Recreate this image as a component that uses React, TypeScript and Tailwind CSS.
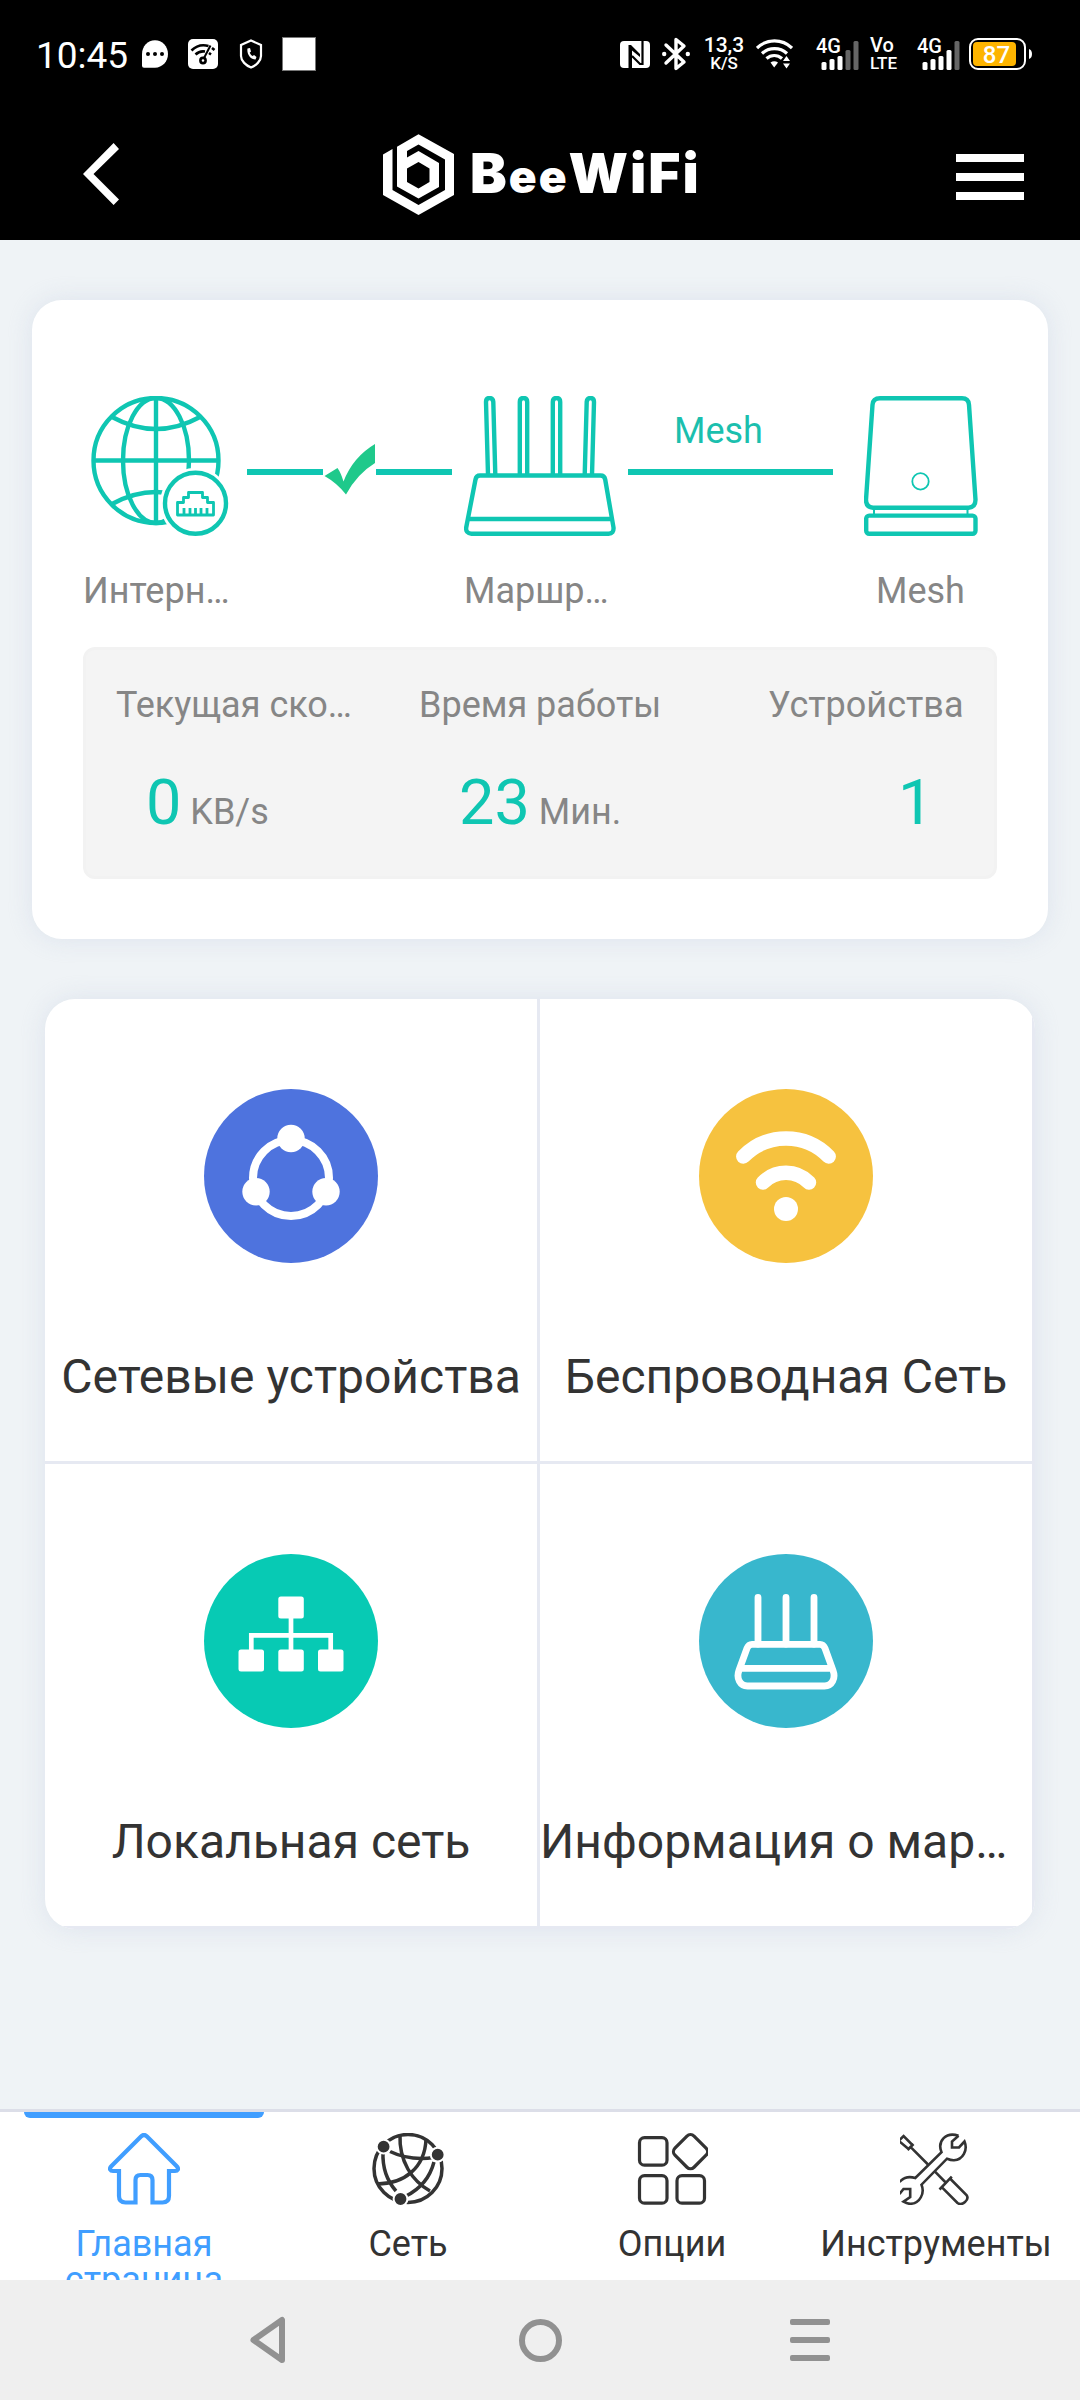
import { ReactNode } from 'react';

type TTile = {
  label: string;
  icon: ReactNode;
  className: string;
};

type TTab = {
  label: string;
  icon: ReactNode;
};

const TEAL = '#0fc6b2';

const Signal = ({ level }: { level: number }) => {
  const tops = [26, 23, 20, 14, 5];

  return (
    <svg width="46" height="44" viewBox="-1 -4 46 44">
      <text
        x="0"
        y="16.500"
        fill="#fff"
        fontSize="21"
        fontWeight="500"
        textLength="25"
        lengthAdjust="spacingAndGlyphs"
      >
        4G
      </text>
      {tops.map((top, i) => (
        <rect
          key={top}
          x={5.5 + i * 8}
          y={top}
          width="5"
          height={34 - top}
          rx="1.5"
          fill={i < level ? '#fff' : '#666'}
        />
      ))}
    </svg>
  );
};

const StatusBar = () => {
  return (
    <div className="flex h-[108px] items-center pr-[46px] pl-[36px]">
      <span className="w-[106px] pt-[3px] text-[37px] leading-[37px]">10:45</span>
      <svg width="26" height="28" viewBox="0 0 26 28">
        <path d="M13 .3C20.200 .3 26 6.500 26 14s-5.800 13.700-13 13.700H2q-2 0-2-2V14C0 6.500 5.800 .3 13 .3Z" fill="#fff" />
        <circle cx="6" cy="14" r="2" />
        <circle cx="13" cy="14" r="2" />
        <circle cx="20" cy="14" r="2" />
      </svg>
      <svg width="30" height="30" viewBox="0 0 30 30" className="ml-[20px]">
        <rect width="30" height="30" rx="5" fill="#fff" />
        <g fill="none" stroke="#000" strokeWidth="2.600">
          <path d="M3.500 11.500C8.500 6.500 15 5.500 20.500 7" />
          <path d="M7.500 15.500C10 13 13.500 12 17 12.500" />
          <path d="M22.500 6.500 16 19" strokeWidth="2" />
          <circle cx="15" cy="21.500" r="2.600" />
          <path d="m24 9 2.500 2M21 14l2 1.500" />
        </g>
      </svg>
      <svg width="24" height="30" viewBox="0 0 24 30" className="ml-[21px]">
        <path d="M12 1.500 22 6v11c0 5-5 9.500-10 11.500C7 26.500 2 22 2 17V6Z" fill="none" stroke="#fff" strokeWidth="2.200" />
        <path d="M8.500 9.500 11 9l1 3.500-1.300 1.300c.8 1.700 1.600 2.500 3 3.300l1.300-1 2.500 1.800-1 2.600C11.500 20.500 7.500 15 8.500 9.500Z" fill="#fff" />
      </svg>
      <div className="ml-[19px] h-[34px] w-[34px] border border-[#777] bg-white" />

      <svg width="30" height="27" viewBox="0 0 30 27" className="ml-auto">
        <rect width="30" height="27" rx="4" fill="#fff" />
        <path d="M8.500 27V4h2.500L20 13v3L12 9.500V27Z" />
        <path d="M22.500 0v23H20L12 15" fill="none" stroke="#000" strokeWidth="2.200" />
      </svg>
      <svg width="28" height="34" viewBox="0 0 28 34" className="ml-[12px]">
        <path d="M4 8l18 17-8 6.500V2.500L22 9 4 26" fill="none" stroke="#fff" strokeWidth="3.400" strokeLinecap="round" strokeLinejoin="round" />
        <circle cx="2.200" cy="17" r="2.200" fill="#fff" />
        <circle cx="25.800" cy="17" r="2.200" fill="#fff" />
      </svg>
      <div className="ml-[14px] flex w-[40px] flex-col items-center font-medium">
        <span className="text-[21px] leading-[18px]">13,3</span>
        <span className="text-[17px] leading-[18px]">K/S</span>
      </div>
      <svg width="37" height="30" viewBox="0 0 37 30" className="ml-[12px]">
        <g fill="none" stroke="#fff" strokeWidth="3.200">
          <path d="M1 9C11-.5 26-.5 36 9" />
          <path d="M6 14.500C13 8 24 8 31 14.500" />
          <path d="M10.500 19.500c4.500-4 11-4 15.500 0" />
        </g>
        <path d="M14.500 23.500q3.700-2.500 7.500 0L18.200 28.500Z" fill="#fff" />
        <path d="m30.500 17 3.500 5h-7ZM27 24.500h7l-3.500 5Z" fill="#fff" />
      </svg>
      <div className="ml-[22px] flex">
        <Signal level={3} />
      </div>
      <div className="ml-[9px] flex w-[32px] flex-col font-medium">
        <span className="text-[20px] leading-[18px]">Vo</span>
        <span className="text-[17px] leading-[19px]">LTE</span>
      </div>
      <div className="ml-[14px] flex">
        <Signal level={4} />
      </div>
      <svg width="66" height="34" viewBox="0 0 66 34" className="ml-[6px]">
        <rect x="2" y="2" width="55" height="30" rx="8" fill="none" stroke="#fff" strokeWidth="2" />
        <rect x="5" y="5" width="43" height="24" rx="4" fill="#fdb400" />
        <path d="M61 12q3 1 3 5t-3 5Z" fill="#fff" />
        <text x="28.500" y="25.500" fill="#fff" fontSize="24" fontWeight="500" textAnchor="middle">
          87
        </text>
      </svg>
    </div>
  );
};

const Header = () => {
  return (
    <div className="flex h-[132px] items-center pr-[56px] pl-[83px]">
      <svg width="36" height="62" viewBox="0 0 36 62">
        <path d="M0 31 30.600 0 36 6 10.500 31 36 56.500 30.600 62Z" fill="#fff" />
      </svg>
      <svg width="71" height="81" viewBox="383 133 71 81" className="ml-[264px]">
        <path
          fill="#fff"
          fillRule="evenodd"
          d="M397 145.700 418.500 133.300 454 153V194L418.500 214 383 194V153.500L392.500 148V189L418.500 204 445 189V158.500L418.500 143.500 407 150V156.500L418.500 150 439 162V186L418.500 197.500 397 185.500ZM418.500 161 407 167.500V181L418.500 187.500 429.500 181V167.500Z"
        />
      </svg>
      <p className="ml-[16px] font-['Inter'] text-[55px] leading-[60px] font-black tracking-[2px] whitespace-nowrap">
        B<span className="text-[46px]">ee</span>WiFi
      </p>
      <div className="ml-auto flex flex-col gap-[11px] pt-[6px]">
        <div className="h-2 w-[68px] bg-white" />
        <div className="h-2 w-[68px] bg-white" />
        <div className="h-2 w-[68px] bg-white" />
      </div>
    </div>
  );
};

const GlobeIcon = () => (
  <svg width="140" height="140" viewBox="90 396 140 140" fill="none" stroke={TEAL} strokeWidth="4.400">
    <circle cx="156" cy="460.500" r="62.500" />
    <path d="M156 398v125M93.500 460.500h125" />
    <ellipse cx="156" cy="460.500" rx="33" ry="62.500" />
    <path d="M112 417q44 24 88 0M112 504q44-24 88 0" />
    <circle cx="195.500" cy="503.300" r="35.500" fill="#fff" stroke="none" />
    <circle cx="195.500" cy="503.300" r="30.500" fill="#fff" />
    <path
      d="M177.500 515v-12.500h6v-5h5v-5h14v5h5v5h6V515ZM184 515v-7M190 515v-7M195.500 515v-7M201 515v-7M207 515v-7"
      strokeWidth="2.800"
      strokeLinejoin="round"
    />
  </svg>
);

const RouterIcon = () => (
  <svg width="152" height="140" viewBox="464 396 152 140" fill="none" stroke={TEAL} strokeWidth="4.400" strokeLinejoin="round">
    <path d="M488 475 486 402q0-4 3.500-4t3.800 4l2 73M519.800 475v-73q0-4 3.700-4t3.700 4v73M552.800 475v-73q0-4 3.700-4t3.700 4v73M584.700 475l2-73q.3-4 3.800-4t3.500 4l-2 73" />
    <path d="M480 475.500H600.500q4 0 4.700 4L613.500 527.500q.5 6-5 6.200H471.500q-6-.5-5.300-6.200L475.500 479.500q.7-4 4.500-4ZM468 519H612" />
  </svg>
);

const MeshIcon = () => (
  <svg width="114" height="140" viewBox="864 396 114 140" fill="none" stroke={TEAL} strokeWidth="4.400">
    <path d="M880 398.300h82q6.500 0 7 6.500l6.500 95q0 7.500-7 7.900H873q-7-.5-7-7.900l6.500-95q.5-6.500 7.500-6.500Z" />
    <rect x="866.200" y="515.600" width="109.300" height="18.100" rx="3" />
    <path d="M874 508v8M967.500 508v8" strokeWidth="2" />
    <circle cx="920.500" cy="481.400" r="8.200" strokeWidth="1.800" />
  </svg>
);

const StatusCard = () => {
  return (
    <div className="mx-8 mt-[60px] h-[639px] rounded-[30px] bg-white pt-[96px] pr-[51px] pl-[51px] shadow-[0_0_24px_rgba(200,208,226,0.45)]">
      <div className="flex h-[140px] items-start pl-[7px]">
        <GlobeIcon />
        <div className="ml-[17px] flex w-[205px] items-start justify-between">
          <div className="mt-[73px] h-[6px] w-[76px] bg-[#0fc6b2]" />
          <svg width="52" height="52" viewBox="0 0 52 52" className="mt-[47px]">
            <path d="M.5 33 13.500 25Q17 30 19.500 38.500 29 14 51 1V20Q33 31 22 51.500 13 40 .5 33Z" fill="#1fc98b" />
          </svg>
          <div className="mt-[73px] h-[6px] w-[76px] bg-[#0fc6b2]" />
        </div>
        <div className="ml-3">
          <RouterIcon />
        </div>
        <div className="ml-3 w-[205px] pt-[17px]">
          <p className="pl-[46px] text-[36px] leading-[36px] text-[#1bbfae]">Mesh</p>
          <div className="mt-5 h-[6px] bg-[#0fc6b2]" />
        </div>
        <div className="ml-[31px]">
          <MeshIcon />
        </div>
      </div>
      <div className="mt-[37px] flex text-[36px] leading-[36px] text-[#868686]">
        <span className="w-[381px]">Интерн…</span>
        <span className="w-[412px]">Маршр…</span>
        <span>Mesh</span>
      </div>
      <div className="mt-[38px] flex h-[232px] w-[914px] rounded-xl border-[3px] border-[#f2f2f2] bg-[#f4f4f4] pt-[37px] pl-[30px] text-[36px] text-[#868686]">
        <div className="w-[303px]">
          <p className="leading-[36px]">Текущая ско…</p>
          <p className="mt-[48px] pl-[30px] leading-[64px]">
            <span className="text-[63px] text-[#0fc6b2]">0</span> KB/s
          </p>
        </div>
        <div className="w-[349px]">
          <p className="leading-[36px]">Время работы</p>
          <p className="mt-[48px] pl-[40px] leading-[64px]">
            <span className="text-[63px] text-[#0fc6b2]">23</span> Мин.
          </p>
        </div>
        <div>
          <p className="leading-[36px]">Устройства</p>
          <p className="mt-[48px] pl-[130px] leading-[64px]">
            <span className="text-[63px] text-[#0fc6b2]">1</span>
          </p>
        </div>
      </div>
    </div>
  );
};

const tiles: TTile[] = [
  {
    label: 'Сетевые устройства',
    className: 'text-center',
    icon: (
      <>
        <circle cx="87" cy="87" r="87" fill="#4e73de" />
        <circle cx="87" cy="89" r="38" fill="none" stroke="#fff" strokeWidth="8" />
        <circle cx="87" cy="49.500" r="13.700" fill="#fff" />
        <circle cx="52" cy="102.700" r="13.700" fill="#fff" />
        <circle cx="122" cy="102.700" r="13.700" fill="#fff" />
      </>
    ),
  },
  {
    label: 'Беспроводная Сеть',
    className: 'text-center',
    icon: (
      <>
        <circle cx="87" cy="87" r="87" fill="#f6c23f" />
        <path
          d="M44.300 67.500A59.600 59.600 0 0 1 129.700 67.500M64 93.500A32 32 0 0 1 110 93.500"
          fill="none"
          stroke="#fff"
          strokeWidth="14.500"
          strokeLinecap="round"
        />
        <circle cx="87" cy="120" r="12" fill="#fff" />
      </>
    ),
  },
  {
    label: 'Локальная сеть',
    className: 'text-center',
    icon: (
      <>
        <circle cx="87" cy="87" r="87" fill="#07cab4" />
        <path d="M87 60V98M47.300 98V81.300H126.700V98" fill="none" stroke="#fff" strokeWidth="4.700" />
        <g fill="#fff">
          <rect x="74.300" y="42.500" width="25.500" height="22" rx="2.500" />
          <rect x="34.500" y="95.500" width="25.500" height="22" rx="2.500" />
          <rect x="74.300" y="95.500" width="25.500" height="22" rx="2.500" />
          <rect x="114" y="95.500" width="25.500" height="22" rx="2.500" />
        </g>
      </>
    ),
  },
  {
    label: 'Информация о мар…',
    className: 'text-left',
    icon: (
      <>
        <circle cx="87" cy="87" r="87" fill="#38b7cd" />
        <g fill="none" stroke="#fff" strokeWidth="6.800">
          <path d="M59 43.500V90M87 43.500V90M115 43.500V90" strokeLinecap="round" />
          <path d="M53 90.300H121c2.500 0 4 1.500 5 4l8 22c3 8-1 15.700-8.500 15.700H48.500c-7.500 0-11.500-7.700-8.500-15.700l8-22c1-2.500 2.500-4 5-4ZM42 114.300H132" />
        </g>
      </>
    ),
  },
];

const TileGrid = () => {
  return (
    <div className="mx-[45px] mt-[60px] grid grid-cols-2 overflow-hidden rounded-[30px] bg-white shadow-[0_0_24px_rgba(200,208,226,0.45)]">
      {tiles.map((item) => (
        <div
          key={item.label}
          className="flex h-[465px] flex-col items-center border-r-[3px] border-b-[3px] border-[#e6e9f2] pt-[90px]"
        >
          <svg width="174" height="174" viewBox="0 0 174 174">
            {item.icon}
          </svg>
          <p
            className={`mt-[86px] w-full text-[48px] leading-[56px] whitespace-nowrap text-[#333] ${item.className}`}
          >
            {item.label}
          </p>
        </div>
      ))}
    </div>
  );
};

const tabs: TTab[] = [
  {
    label: 'Главная страница',
    icon: (
      <path
        d="M33 3.500 3.500 33c-3 3-1 5 1.500 5H11V63q0 6.500 6.500 6.500H27.500V47q0-5 5-5h7q5 0 5 5V69.500H54.500q6.500 0 6.500-6.500V38h6c2.500 0 4.500-2 1.500-5L39 3.500q-3-3-6 0Z"
        strokeWidth="4.200"
      />
    ),
  },
  {
    label: 'Сеть',
    icon: (
      <>
        <g strokeWidth="3.500">
          <circle cx="36" cy="35.500" r="34" />
          <path d="M28 2C27 28 40 48 58 58M54 6C53 35 32 51 5 51" />
          <path d="M18 18.500Q38 28 62 24.500M11 19Q10 42 24 58M62 29Q56 52 34 63" />
        </g>
        <g fill="currentColor" stroke="#fff" strokeWidth="2">
          <circle cx="11.600" cy="13.700" r="6.900" />
          <circle cx="65.700" cy="21.700" r="6.900" />
          <circle cx="28.500" cy="66" r="6.900" />
        </g>
      </>
    ),
  },
  {
    label: 'Опции',
    icon: (
      <g strokeWidth="3.200">
        <rect x="3.500" y="4.700" width="27.500" height="27.500" rx="5" />
        <rect x="3.500" y="42.700" width="27.500" height="27.500" rx="5" />
        <rect x="41" y="42.700" width="27.500" height="27.500" rx="5" />
        <rect x="41" y="5.200" width="27" height="27" rx="5" transform="rotate(45 54.500 18.700)" />
      </g>
    ),
  },
  {
    label: 'Инструменты',
    icon: (
      <g strokeWidth="2.600">
        <path d="M58.500 2.700 52 8.500V14.500H59L64.500 8.500C68 17 63 27 54 27.200 51.500 27.300 49 26.500 47 25.700L21.500 51.700C25 60 20 70.500 10.500 70.800 8 70.900 6 70 3.500 68.700L10.200 64V56H3.500L-.5 61" />
        <path d="M-.5 49C3 45 9 43 15.300 45L41.500 19.300C37 8 46-1.500 58.500 2.700" />
        <path d="M-.5 7 3.600 3 12.500 12 8.500 16-1 8M13.500 11 7.500 17M11.200 14.700 28 31.500M35 38.700 45.700 49.500M39.500 56.500 51.800 43.700M42 54.300 57.500 70Q61 72.500 65 69T66.500 62L50.500 46" />
      </g>
    ),
  },
];

const TabBar = () => {
  return (
    <div className="flex h-[171px] overflow-hidden border-t-[3px] border-[#dcdee8] bg-white px-3">
      {tabs.map((item, i) => (
        <div
          key={item.label}
          className={`flex w-[264px] flex-col items-center ${i === 0 ? 'text-[#409eff]' : 'text-[#333]'}`}
        >
          <div className={`h-[6px] w-[240px] shrink-0 rounded-b-md ${i === 0 ? 'bg-[#409eff]' : ''}`} />
          <svg
            width="72"
            height="72"
            viewBox="0 0 72 72"
            fill="none"
            stroke="currentColor"
            className="mt-[15px] shrink-0"
          >
            {item.icon}
          </svg>
          <p className="mt-[21px] w-[240px] shrink-0 text-center text-[36px] leading-[36px]">
            {item.label}
          </p>
        </div>
      ))}
    </div>
  );
};

const SystemNav = () => {
  return (
    <div className="flex h-[120px] items-center bg-[#efefef] px-[135px]">
      <div className="flex w-[270px] justify-center">
        <svg width="40" height="48" viewBox="0 0 40 48">
          <path d="M3.500 24 32 4V44Z" fill="none" stroke="#919191" strokeWidth="6" strokeLinejoin="round" />
        </svg>
      </div>
      <div className="flex w-[270px] justify-center">
        <div className="h-[43px] w-[43px] rounded-full border-[6px] border-[#919191]" />
      </div>
      <div className="flex w-[270px] flex-col items-center gap-3">
        <div className="h-[6px] w-[40px] rounded-xs bg-[#919191]" />
        <div className="h-[6px] w-[40px] rounded-xs bg-[#919191]" />
        <div className="h-[6px] w-[40px] rounded-xs bg-[#919191]" />
      </div>
    </div>
  );
};

const App = () => {
  return (
    <div className="flex h-[2400px] w-[1080px] flex-col overflow-hidden bg-[#eff3f6] font-['Roboto',sans-serif]">
      <header className="bg-black text-white">
        <StatusBar />
        <Header />
      </header>
      <main className="flex-1">
        <StatusCard />
        <TileGrid />
      </main>
      <footer>
        <TabBar />
        <SystemNav />
      </footer>
    </div>
  );
};

export default App;
